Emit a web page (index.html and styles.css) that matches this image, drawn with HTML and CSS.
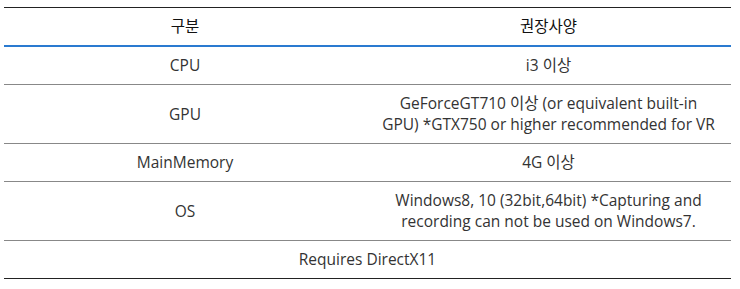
FILE: index.html
```html
<!DOCTYPE html>
<html lang="ko">
<head>
<meta charset="utf-8">
<link rel="stylesheet" href="styles.css">
</head>
<body>
<table class="spec">
  <thead>
    <tr><th class="col-a">구분</th><th class="col-b">권장사양</th></tr>
  </thead>
  <tbody>
    <tr class="short"><td>CPU</td><td>i3 이상</td></tr>
    <tr class="tall"><td>GPU</td><td>GeForceGT710 이상 (or equivalent built-in<br>GPU) *GTX750 or higher recommended for VR</td></tr>
    <tr class="short"><td>MainMemory</td><td>4G 이상</td></tr>
    <tr class="tall"><td>OS</td><td>Windows8, 10 (32bit,64bit) *Capturing and recording can not be used on Windows7.</td></tr>
    <tr class="short last"><td colspan="2">Requires DirectX11</td></tr>
  </tbody>
</table>
</body>
</html>
```
FILE: styles.css
```css
html, body { margin: 0; padding: 0; background: #fff; }
body { padding: 7px 9px 0 4px; }
.spec {
  width: 727px;
  border-collapse: collapse;
  font-family: "Open Sans", "Noto Sans CJK KR", sans-serif;
  font-size: 15.5px;
  line-height: 21px;
  color: #333;
  table-layout: fixed;
}
.spec thead tr { border-top: 1px solid #222; border-bottom: 2px solid #2a7ad0; }
.spec th {
  font-weight: normal;
  color: #111;
  height: 37px;
  padding: 0;
  text-align: center;
  vertical-align: middle;
}
.col-a { width: 362px; }
.spec td {
  text-align: center;
  vertical-align: middle;
  padding: 8px 8px;
  white-space: normal;
}
.spec tbody tr { border-bottom: 1px solid #888; }
.spec tbody tr.last { border-bottom: 1px solid #222; }
.spec tr.short td { height: 21px; }
.spec tr.tall td { height: 42px; }
```
